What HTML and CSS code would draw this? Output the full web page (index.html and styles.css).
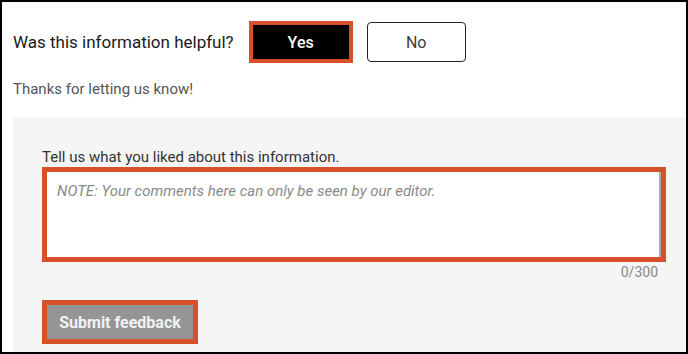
FILE: index.html
```html
<!DOCTYPE html>
<html lang="en">
<head>
    <meta charset="UTF-8">
    <meta name="viewport" content="width=device-width, initial-scale=1.0">
    <title>Feedback</title>
    <link rel="stylesheet" href="styles.css">
</head>
<body>
    <div class="frame">
        <div class="helpful">
            <span class="question">Was this information helpful?</span>
            <button class="btn-yes" type="button">Yes</button>
            <button class="btn-no" type="button">No</button>
        </div>
        <p class="thanks">Thanks for letting us know!</p>
        <form class="feedback" onsubmit="event.preventDefault()">
            <label class="feedback-label" for="comments">Tell us what you liked about this information.</label>
            <textarea id="comments" class="comments" maxlength="300" placeholder="NOTE: Your comments here can only be seen by our editor."></textarea>
            <div class="counter">0/300</div>
            <button class="btn-submit" type="submit">Submit feedback</button>
        </form>
    </div>
</body>
</html>
```

FILE: styles.css
```css
* {
    box-sizing: border-box;
}
body {
    margin: 0;
    font-family: Roboto, "Liberation Sans", Arial, sans-serif;
    background: #fff;
}
.frame {
    width: 688px;
    height: 354px;
    border: 2px solid #000;
    padding-left: 11px;
    overflow: hidden;
}
.helpful {
    display: flex;
    align-items: center;
    margin-top: 19px;
}
.question {
    font-size: 17px;
    color: #1a1a1a;
    margin-right: 15px;
}
.btn-yes {
    width: 104px;
    height: 42px;
    background: #000;
    color: #fff;
    border: 4px solid #d6502a;
    font-family: inherit;
    font-size: 16px;
    font-weight: 500;
    cursor: pointer;
}
.btn-no {
    width: 99px;
    height: 40px;
    margin-left: 14px;
    background: #fff;
    color: #3c3c3c;
    border: 1px solid #222;
    border-radius: 4px;
    font-family: inherit;
    font-size: 16px;
    cursor: pointer;
}
.thanks {
    margin: 16px 0 18px;
    font-size: 15px;
    line-height: 20px;
    color: #555;
}
.feedback {
    background: #f5f5f5;
    height: 235px;
    padding: 30px 20px 8px 29px;
    display: flex;
    flex-direction: column;
    align-items: flex-start;
}
.feedback-label {
    font-size: 15px;
    line-height: 20px;
    color: #333;
}
.comments {
    width: 624px;
    height: 95px;
    border: 5px solid #d6502a;
    box-shadow: inset -2px 0 0 #aaa;
    padding: 9px 10px;
    font-family: inherit;
    font-size: 15px;
    line-height: 20px;
    resize: none;
    outline: none;
}
.comments::placeholder {
    color: #8a8a8a;
    font-style: italic;
}
.counter {
    align-self: stretch;
    text-align: right;
    padding-right: 8px;
    font-size: 14px;
    line-height: 20px;
    color: #888;
}
.btn-submit {
    margin-top: 18px;
    width: 156px;
    height: 44px;
    background: #959595;
    color: #f2f2f2;
    border: 5px solid #d6502a;
    font-family: inherit;
    font-size: 16px;
    font-weight: bold;
    cursor: pointer;
}
```
